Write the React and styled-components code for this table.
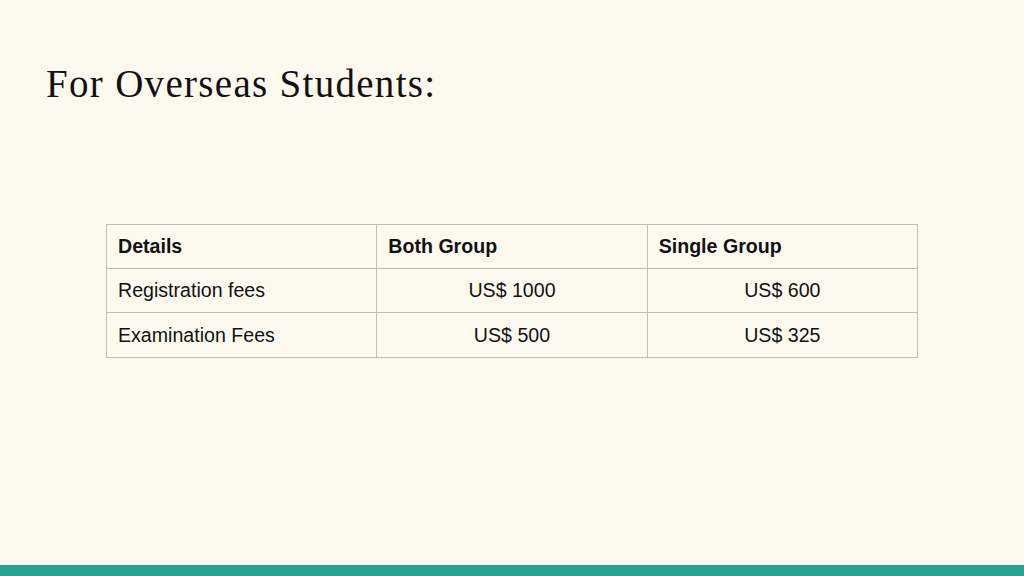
import styled, { createGlobalStyle } from "styled-components";

const GlobalStyle = createGlobalStyle`
  html, body {
    margin: 0;
    padding: 0;
    background: #fdf9ef;
  }
`;

const Slide = styled.div`
  width: 1024px;
  height: 576px;
  background: #fdf9ef;
  display: flex;
  flex-direction: column;
  overflow: hidden;
`;

const Content = styled.div`
  flex: 1;
  display: flex;
  flex-direction: column;
  padding: 0 0 0 46px;
`;

const Title = styled.h1`
  margin: 60px 0 0;
  font-family: "Liberation Serif", "DejaVu Serif", serif;
  font-weight: normal;
  font-size: 39px;
  line-height: 48px;
  letter-spacing: 1.3px;
  color: #111;
`;

const FeeTable = styled.table`
  margin: 116px 0 0 60px;
  width: 812px;
  border-collapse: collapse;
  table-layout: fixed;
  font-family: "Liberation Sans", Arial, sans-serif;
  font-size: 19.6px;
  color: #111;
`;

const Cell = styled.td`
  border: 1.5px solid #c1bdb5;
  height: 43px;
  padding: 0 11px;
  text-align: ${(p) => (p.$center ? "center" : "left")};
  font-weight: ${(p) => (p.$head ? "bold" : "normal")};
`;

const LastCell = styled(Cell)`
  height: 44px;
`;

const Footer = styled.div`
  height: 11px;
  background: #28a393;
`;

const rows = [
  ["Registration fees", "US$ 1000", "US$ 600"],
  ["Examination Fees", "US$ 500", "US$ 325"],
];

export default function App() {
  return (
    <Slide>
      <GlobalStyle />
      <Content>
        <Title>For Overseas Students:</Title>
        <FeeTable>
          <tbody>
            <tr>
              <Cell $head>Details</Cell>
              <Cell $head>Both Group</Cell>
              <Cell $head>Single Group</Cell>
            </tr>
            {rows.map((r, i) => {
              const C = i === rows.length - 1 ? LastCell : Cell;
              return (
                <tr key={r[0]}>
                  <C>{r[0]}</C>
                  <C $center>{r[1]}</C>
                  <C $center>{r[2]}</C>
                </tr>
              );
            })}
          </tbody>
        </FeeTable>
      </Content>
      <Footer />
    </Slide>
  );
}
